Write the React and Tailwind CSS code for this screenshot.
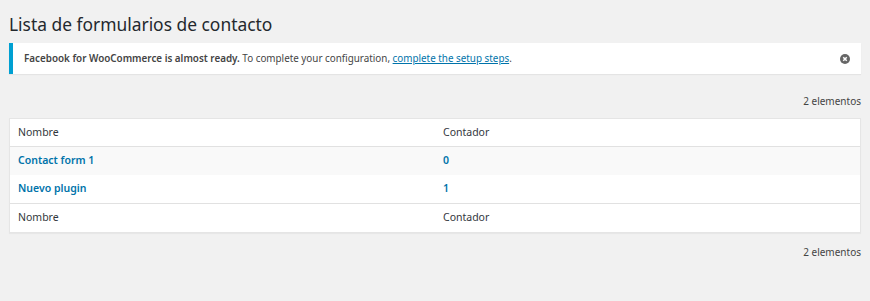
export default function App() {
  const rows = [
    { name: "Contact form 1", count: "0" },
    { name: "Nuevo plugin", count: "1" },
  ];

  return (
    <div className="min-h-[301px] bg-[#f1f1f1] px-[9px] pt-[11px] text-[10px] text-[#444] [font-family:'Noto_Sans',sans-serif]">
      <h1 className="text-[17.4px] font-normal leading-[27px] text-[#23282d]">
        Lista de formularios de contacto
      </h1>

      {/* aviso */}
      <div className="mt-[5px] flex h-[31px] items-center justify-between border-l-4 border-[#00a0d2] bg-white pl-[11px] pr-[11px] shadow-[0_1px_1px_rgba(0,0,0,0.05)]">
        <p className="text-[9.85px] text-[#444]">
          <strong className="font-semibold">Facebook for WooCommerce is almost ready.</strong> To complete your
          configuration,{" "}
          <a href="#" className="text-[#0073aa] underline">
            complete the setup steps
          </a>
          .
        </p>
        <svg width="10" height="10" viewBox="0 0 20 20">
          <circle cx="10" cy="10" r="10" fill="#666" />
          <path d="M6.5 6.5l7 7M13.5 6.5l-7 7" stroke="#fff" strokeWidth="3" />
        </svg>
      </div>

      <div className="mt-[13px] text-right leading-[28px]">2 elementos</div>

      <div className="mt-[3px] border border-[#e5e5e5] bg-white text-[10.5px] shadow-[0_1px_1px_rgba(0,0,0,0.04)]">
        <div className="grid h-[28px] grid-cols-[425px_1fr] items-center border-b border-[#e1e1e1] px-[8px] text-[#32373c]">
          <span>Nombre</span>
          <span>Contador</span>
        </div>
        {rows.map((row, i) => (
          <div
            key={row.name}
            className={`grid h-[28px] grid-cols-[425px_1fr] items-center px-[8px] font-semibold text-[#0073aa] ${
              i % 2 === 0 ? "bg-[#f9f9f9]" : "bg-white"
            }`}
          >
            <a href="#">{row.name}</a>
            <a href="#">{row.count}</a>
          </div>
        ))}
        <div className="grid h-[29px] grid-cols-[425px_1fr] items-center border-t border-[#e1e1e1] px-[8px] text-[#32373c]">
          <span>Nombre</span>
          <span>Contador</span>
        </div>
      </div>

      <div className="mt-[5px] text-right leading-[28px]">2 elementos</div>
    </div>
  );
}
